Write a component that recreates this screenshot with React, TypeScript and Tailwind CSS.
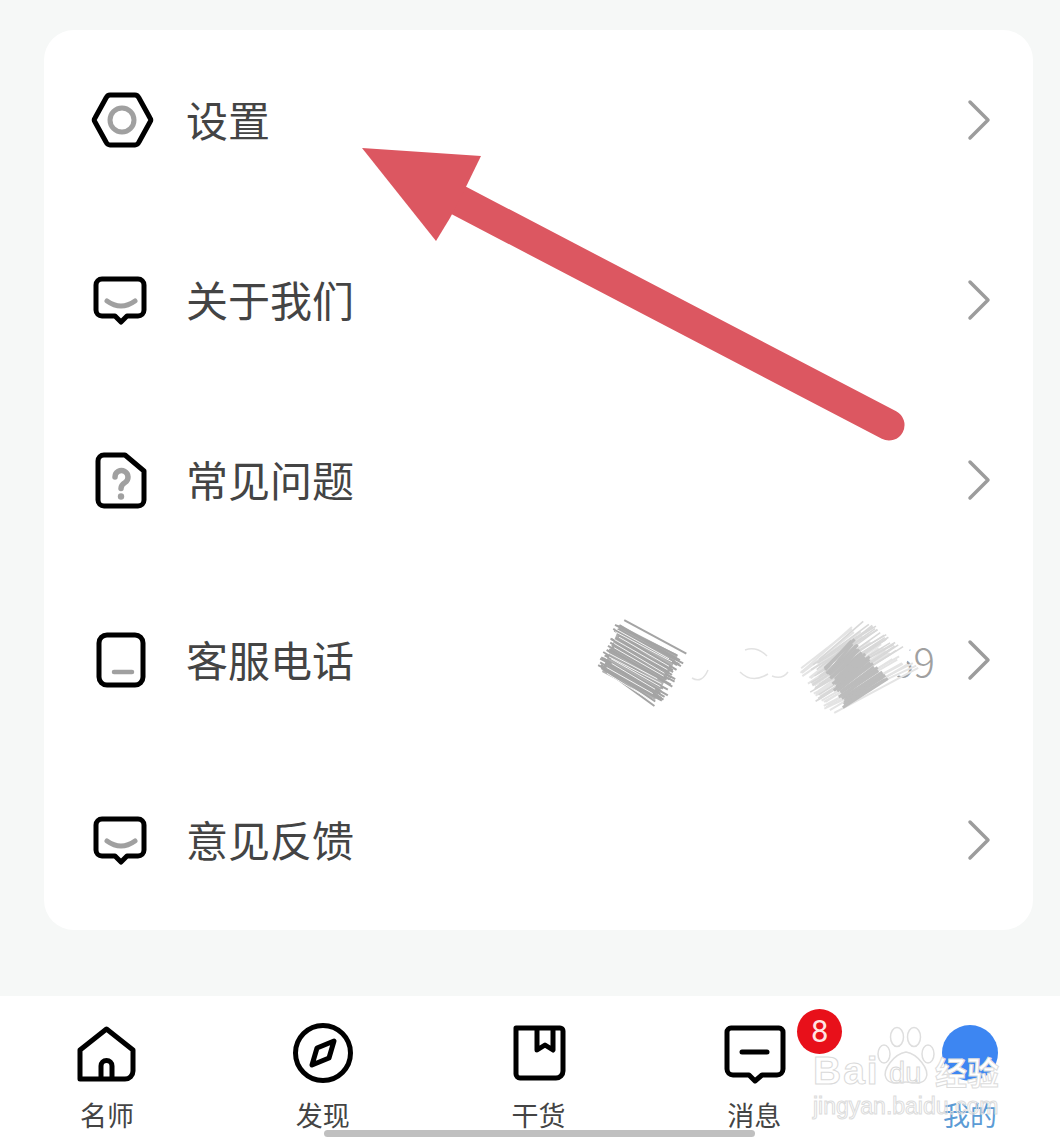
import React from 'react';

const GREY = '#a0a0a0';

function HexIcon() {
  return (
    <svg width="64" height="64" viewBox="0 0 64 64" fill="none" strokeLinejoin="round">
      <path d="M5 34 Q3.5 32 5 30 L16 10 Q17.5 7 20 7 H45 Q47.5 7 49 10 L60 30 Q61.5 32 60 34 L49 54 Q47.5 57 45 57 H20 Q17.5 57 16 54 Z" stroke="#000" strokeWidth="5" />
      <circle cx="32" cy="32" r="12" stroke={GREY} strokeWidth="5" />
    </svg>
  );
}

function BubbleIcon() {
  return (
    <svg width="64" height="64" viewBox="0 0 64 64" fill="none" strokeLinecap="round" strokeLinejoin="round">
      <path d="M12 11 H48 a6 6 0 0 1 6 6 V42 a6 6 0 0 1 -6 6 H37 L31 54 L25 48 H12 a6 6 0 0 1 -6 -6 V17 a6 6 0 0 1 6 -6 Z" stroke="#000" strokeWidth="5" />
      <path d="M17 33 Q31 43 45 33" stroke={GREY} strokeWidth="5" />
    </svg>
  );
}

function QuestionIcon() {
  return (
    <svg width="64" height="64" viewBox="0 0 64 64" fill="none" strokeLinecap="round" strokeLinejoin="round">
      <path d="M14 7 H35 L54 23 V52 a6 6 0 0 1 -6 6 H14 a6 6 0 0 1 -6 -6 V13 a6 6 0 0 1 6 -6 Z" stroke="#000" strokeWidth="5" />
      <path d="M25 29 a6.5 6.5 0 1 1 10 5.5 c-2.5 1.5 -4 3 -4 6" stroke={GREY} strokeWidth="5.5" />
      <circle cx="31" cy="48.5" r="3.2" fill={GREY} />
    </svg>
  );
}

function PhoneIcon() {
  return (
    <svg width="64" height="64" viewBox="0 0 64 64" fill="none" strokeLinecap="round" strokeLinejoin="round">
      <rect x="9" y="7" width="44" height="50" rx="8" stroke="#000" strokeWidth="5" />
      <path d="M24 44 H42" stroke={GREY} strokeWidth="4.5" />
    </svg>
  );
}

function Chevron() {
  return (
    <svg width="30" height="44" viewBox="0 0 30 44" fill="none" stroke="#9c9c9c" strokeWidth="3.5" strokeLinecap="round" strokeLinejoin="round">
      <path d="M6 4 L24 22 L6 40" />
    </svg>
  );
}

function HomeIcon() {
  return (
    <svg width="64" height="64" viewBox="0 0 64 64" fill="none" stroke="#000" strokeWidth="5" strokeLinejoin="round">
      <path d="M31.5 8 L58 29 V50 a8 8 0 0 1 -8 8 H5 V29 Z" />
      <path d="M26 58 V45 a5.5 5.5 0 0 1 11 0 V58" />
    </svg>
  );
}

function CompassIcon() {
  return (
    <svg width="64" height="64" viewBox="0 0 64 64" fill="none" stroke="#000" strokeWidth="5" strokeLinejoin="round">
      <circle cx="32" cy="32" r="27.5" />
      <path d="M43 20 L38 37 L21 44 L26 27 Z" />
    </svg>
  );
}

function BookIcon() {
  return (
    <svg width="64" height="64" viewBox="0 0 64 64" fill="none" stroke="#000" strokeWidth="5" strokeLinejoin="round">
      <path d="M9 7 H53 a3 3 0 0 1 3 3 V50 a7 7 0 0 1 -7 7 H13 a4 4 0 0 1 -4 -4 Z" />
      <path d="M30 7 V29 L38 24 L46 29 V7" />
    </svg>
  );
}

function MessageIcon() {
  return (
    <svg width="64" height="64" viewBox="0 0 64 64" fill="none" stroke="#000" strokeWidth="5" strokeLinecap="round" strokeLinejoin="round">
      <path d="M9 7 H57 a4 4 0 0 1 4 4 V48 a6 6 0 0 1 -6 6 H40 L33 60 L27 54 H11 a6 6 0 0 1 -6 -6 V11 a4 4 0 0 1 4 -4 Z" />
      <path d="M20 31 H45" />
    </svg>
  );
}

// stable pseudo random, so the scribble does not change between renders
const noise = (i: number) => {
  const v = Math.sin(i * 12.9898) * 43758.5453;
  return v - Math.floor(v);
};

function hatch(count: number, a: number[], b: number[], c: number[], d: number[], jitter: number, color: string, width: number, seed: number) {
  const out = [];
  for (let i = 0; i < count; i++) {
    const t = i / (count - 1);
    const x0 = a[0] + (b[0] - a[0]) * t + (noise(seed + i) - 0.5) * jitter;
    const y0 = a[1] + (b[1] - a[1]) * t + (noise(seed + i + 50) - 0.5) * jitter * 0.5;
    const x1 = c[0] + (d[0] - c[0]) * t + (noise(seed + i + 100) - 0.5) * jitter;
    const y1 = c[1] + (d[1] - c[1]) * t + (noise(seed + i + 150) - 0.5) * jitter * 0.5;
    out.push(<line key={`${seed}-${i}`} x1={x0} y1={y0} x2={x1} y2={y1} stroke={color} strokeWidth={width} />);
  }
  return out;
}

function Scribble() {
  return (
    <svg className="absolute left-0 top-0" width="1060" height="1140" viewBox="0 0 1060 1140" fill="none">
      <path d="M800 660 L850 625 L912 640 L905 670 L860 708 L815 700 Z" fill="#fff" />
      <path d="M620 625 L678 655 L655 700 L602 672 Z" fill="#b2b2b2" />
      {hatch(36, [620, 622], [600, 670], [682, 656], [658, 704], 10, '#a4a4a4', 2, 1)}
      {hatch(12, [618, 628], [606, 672], [672, 658], [652, 698], 8, '#f4f4f4', 1, 300)}
      {hatch(30, [800, 668], [830, 712], [850, 628], [915, 668], 10, '#e4e4e4', 2, 500)}
      {hatch(22, [815, 660], [815, 700], [868, 622], [900, 650], 10, '#d8d8d8', 1.6, 700)}
      {hatch(26, [826, 668], [845, 706], [852, 640], [888, 680], 6, '#bcbcbc', 3, 900)}
      <path d="M692 678 q10 6 16 -8 M740 672 q12 12 28 2 M772 676 q10 4 16 -4 M745 650 q12 -4 22 6" stroke="#e2e2e2" strokeWidth="1.5" />
    </svg>
  );
}

function Arrow() {
  return (
    <svg className="absolute left-0 top-0" width="1060" height="1140" viewBox="0 0 1060 1140" fill="none">
      <path d="M889 425 L458 200" stroke="#dc5761" strokeWidth="31" strokeLinecap="round" />
      <path d="M362 148 L481 156 L462 195 L450 218 L436 241 Z" fill="#dc5761" />
    </svg>
  );
}

function Watermark() {
  return (
    <div className="absolute left-[813px] top-[1054px] flex w-[196px] flex-col gap-[5px] font-['Liberation_Sans',sans-serif]">
      <svg className="absolute left-[63px] top-[-28px]" width="60" height="62" viewBox="0 0 60 62" fill="none" stroke="#dedede" strokeWidth="1.5">
        <ellipse cx="8" cy="28" rx="6" ry="9" />
        <ellipse cx="21" cy="11" rx="6.5" ry="9.5" />
        <ellipse cx="38" cy="11" rx="6.5" ry="9.5" />
        <ellipse cx="52" cy="28" rx="6" ry="9" />
        <path d="M30 26 C18 28 6 44 10 52 C14 60 24 56 30 56 C36 56 46 60 50 52 C54 44 42 28 30 26 Z" />
      </svg>
      <div className="flex h-[34px] items-end">
        <span className="w-[76px] text-[39px] font-bold leading-[34px] tracking-[2px] text-transparent [-webkit-text-stroke:1px_#dadada]">Bai</span>
        <span className="w-[46px] text-[29px] leading-[30px] text-transparent [-webkit-text-stroke:1px_#d8d8d8]">du</span>
        <span className="font-['Noto_Sans_CJK_SC',sans-serif] text-[32px] font-bold leading-[34px] text-white [-webkit-text-stroke:1px_#dcdcdc]">经验</span>
      </div>
      <span className="whitespace-nowrap text-[23px] leading-[26px] text-transparent [-webkit-text-stroke:1px_#dcdcdc]">jingyan.baidu.com</span>
    </div>
  );
}

const rows = [
  { label: '设置', icon: <HexIcon /> },
  { label: '关于我们', icon: <BubbleIcon /> },
  { label: '常见问题', icon: <QuestionIcon /> },
  { label: '客服电话', icon: <PhoneIcon />, value: '59' },
  { label: '意见反馈', icon: <BubbleIcon /> },
];

const tabs = [
  { label: '名师', icon: <HomeIcon /> },
  { label: '发现', icon: <CompassIcon /> },
  { label: '干货', icon: <BookIcon /> },
  { label: '消息', icon: <MessageIcon />, badge: '8' },
  { label: '我的', icon: <div className="h-[56px] w-[56px] rounded-full bg-[#3d86f2]" />, active: true },
];

export default function App() {
  return (
    <div className="relative h-[1140px] w-[1060px] overflow-hidden bg-[#f6f8f7] font-['Noto_Sans_CJK_SC',sans-serif]">
      <div className="ml-[44px] mt-[30px] w-[989px] rounded-[30px] bg-white">
        {rows.map((row) => (
          <div key={row.label} className="flex h-[180px] items-center pl-[46px] pr-[39px]">
            {row.icon}
            <span className="mb-[3px] ml-[32px] text-[42px] leading-none text-[#444]">{row.label}</span>
            {row.value && (
              <span className="ml-auto mr-[29px] text-[40px] font-light leading-none text-[#a0a0a0]">{row.value}</span>
            )}
            <div className={row.value ? '' : 'ml-auto'}>
              <Chevron />
            </div>
          </div>
        ))}
      </div>

      <div className="mt-[66px] flex h-[144px] justify-between bg-white pl-[57px] pr-[40px] pt-[25px]">
        {tabs.map((tab) => (
          <div key={tab.label} className="relative flex w-[100px] flex-col items-center">
            <div className="flex h-[64px] w-[64px] items-center justify-center">{tab.icon}</div>
            <span className={`mt-[16px] text-[27px] leading-none ${tab.active ? 'text-[#5b9bd5]' : 'text-[#444]'}`}>
              {tab.label}
            </span>
            {tab.badge && (
              <span className="absolute left-[93px] top-[-12px] flex h-[45px] w-[45px] items-center justify-center rounded-full bg-[#e8101a] font-['Roboto',sans-serif] text-[31px] leading-none text-[#ffe4e4]">
                {tab.badge}
              </span>
            )}
          </div>
        ))}
      </div>

      <Scribble />
      <Arrow />
      <Watermark />
      <div className="absolute left-[324px] top-[1130px] h-[7px] w-[431px] rounded-full bg-[#c0c0c0]" />
    </div>
  );
}
